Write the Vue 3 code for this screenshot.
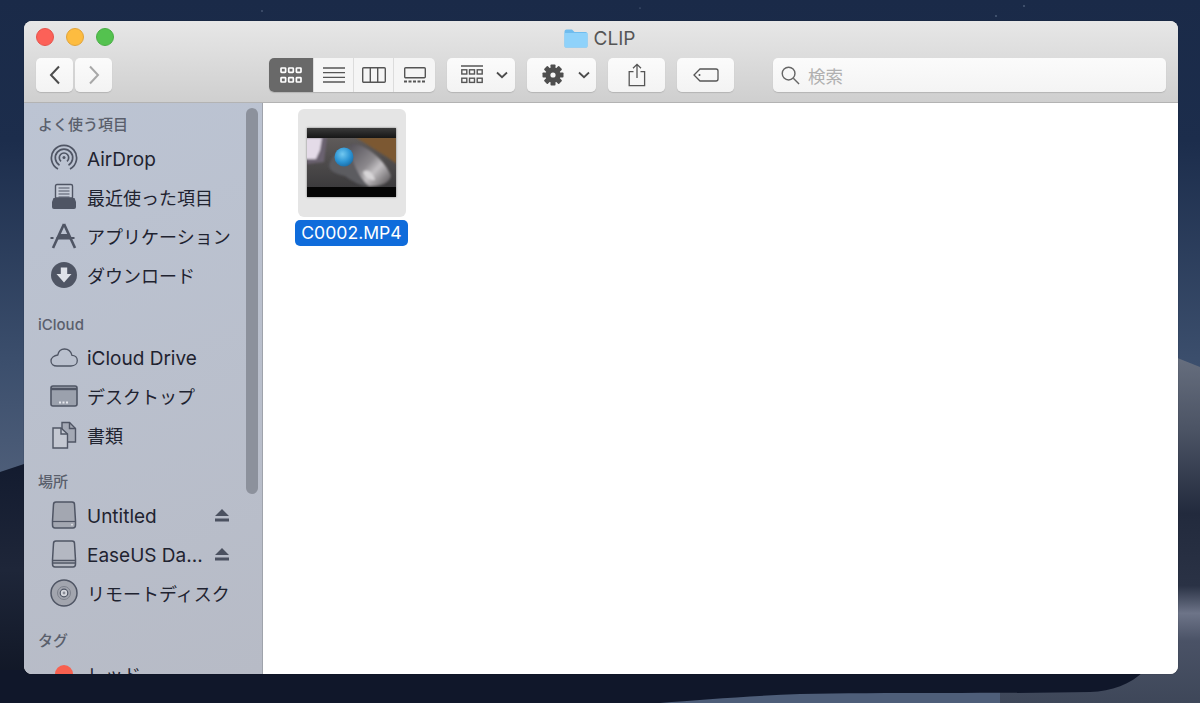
<template>
  <div class="desktop">
    <svg class="wallpaper" viewBox="0 0 1200 703" preserveAspectRatio="none">
      <defs>
        <linearGradient id="sky" x1="0" y1="0" x2="0" y2="1">
          <stop offset="0" stop-color="#1a2a48" />
          <stop offset="0.2" stop-color="#1c2d4c" />
          <stop offset="0.52" stop-color="#3c4f6d" />
          <stop offset="0.68" stop-color="#4e5e79" />
        </linearGradient>
        <linearGradient id="dune" gradientUnits="userSpaceOnUse" x1="0" y1="358" x2="0" y2="703">
          <stop offset="0" stop-color="#666e7e" />
          <stop offset="0.22" stop-color="#4a5263" />
          <stop offset="0.45" stop-color="#222a3d" />
          <stop offset="0.66" stop-color="#2a3245" />
          <stop offset="0.74" stop-color="#6d7488" />
          <stop offset="0.82" stop-color="#4a5266" />
          <stop offset="1" stop-color="#3e4759" />
        </linearGradient>
        <linearGradient id="shade" x1="0" y1="0" x2="0" y2="1">
          <stop offset="0" stop-color="#131b2f" />
          <stop offset="0.45" stop-color="#1e2639" />
          <stop offset="1" stop-color="#0e1422" />
        </linearGradient>
      </defs>
      <rect width="1200" height="703" fill="url(#sky)" />
      <g fill="#6f7f99">
        <circle cx="1024" cy="6" r="0.8" />
        <circle cx="996" cy="16" r="0.8" />
        <circle cx="262" cy="11" r="0.7" />
        <circle cx="640" cy="8" r="0.6" />
      </g>
      <path d="M1170 355 L1200 367 V703 H1000 V560 H1170 Z" fill="url(#dune)" />
      <path d="M0 472 L30 462 V703 H0 Z" fill="url(#shade)" />
      <path d="M0 670 H1145 C1130 685 1112 691 1090 692 C1000 694 880 692 800 694 C750 696 700 700 660 703 H0 Z" fill="#10172a" />
    </svg>

    <div class="window">
      <header class="titlebar">
        <div class="title-row">
          <div class="lights">
            <span class="light red"></span>
            <span class="light yellow"></span>
            <span class="light green"></span>
          </div>
          <div class="title">
            <svg class="title-folder" viewBox="0 0 24 19">
              <path d="M0.5 2.5 Q0.5 0.5 2.5 0.5 H8 L10.5 3 H21.5 Q23.5 3 23.5 5 V17 Q23.5 18.5 22 18.5 H2 Q0.5 18.5 0.5 17 Z" fill="#6fbcee" />
              <path d="M0.5 4 H23.5 V17 Q23.5 18.5 22 18.5 H2 Q0.5 18.5 0.5 17 Z" fill="#8fd2fa" />
            </svg>
            <span>CLIP</span>
          </div>
        </div>
        <div class="toolbar">
          <div class="nav">
            <button class="btn nav-btn">
              <svg viewBox="0 0 14 20" width="14" height="20"><path d="M11 1.5 L3 10 L11 18.5" fill="none" stroke="#4c4c4c" stroke-width="2" /></svg>
            </button>
            <button class="btn nav-btn">
              <svg viewBox="0 0 14 20" width="14" height="20"><path d="M3 1.5 L11 10 L3 18.5" fill="none" stroke="#a8a8a8" stroke-width="2" /></svg>
            </button>
          </div>

          <div class="views">
            <div class="view active">
              <svg viewBox="0 0 22 16" width="22" height="16" fill="none" stroke="#fff" stroke-width="1.7">
                <rect x="1" y="1" width="4.6" height="4.4" rx="0.6" /><rect x="8.7" y="1" width="4.6" height="4.4" rx="0.6" /><rect x="16.4" y="1" width="4.6" height="4.4" rx="0.6" />
                <rect x="1" y="10.6" width="4.6" height="4.4" rx="0.6" /><rect x="8.7" y="10.6" width="4.6" height="4.4" rx="0.6" /><rect x="16.4" y="10.6" width="4.6" height="4.4" rx="0.6" />
              </svg>
            </div>
            <div class="view">
              <svg viewBox="0 0 22 16" width="22" height="16" stroke="#555" stroke-width="1.3">
                <path d="M0 1 H22 M0 5.6 H22 M0 10.3 H22 M0 15 H22" />
              </svg>
            </div>
            <div class="view">
              <svg viewBox="0 0 24 16" width="24" height="16" fill="none" stroke="#555" stroke-width="1.4">
                <rect x="0.7" y="0.7" width="22.6" height="14.6" rx="1" /><path d="M8.3 1 V15 M15.7 1 V15" />
              </svg>
            </div>
            <div class="view">
              <svg viewBox="0 0 22 16" width="22" height="16" fill="none" stroke="#555" stroke-width="1.4">
                <rect x="0.7" y="0.7" width="20.6" height="10" rx="1" /><path d="M0 14.5 H22" stroke-width="2.2" stroke-dasharray="3 1.5" />
              </svg>
            </div>
          </div>

          <button class="btn arrange">
            <svg viewBox="0 0 22 20" width="22" height="20" fill="none" stroke="#555" stroke-width="1.4">
              <path d="M0 1 H22" />
              <rect x="0.8" y="4.8" width="5" height="4.2" /><rect x="8.5" y="4.8" width="5" height="4.2" /><rect x="16.2" y="4.8" width="5" height="4.2" />
              <rect x="0.8" y="13.2" width="5" height="4.2" /><rect x="8.5" y="13.2" width="5" height="4.2" /><rect x="16.2" y="13.2" width="5" height="4.2" />
            </svg>
            <svg class="chev" viewBox="0 0 12 8" width="12" height="8"><path d="M1 1.5 L6 6.2 L11 1.5" fill="none" stroke="#4c4c4c" stroke-width="1.8" /></svg>
          </button>

          <button class="btn action">
            <svg viewBox="0 0 22 22" width="22" height="22">
              <g fill="#4e4e4e">
                <circle cx="11" cy="11" r="7.5" />
                <rect x="8.5" y="0.5" width="5" height="21" rx="0.8" />
                <rect x="8.5" y="0.5" width="5" height="21" rx="0.8" transform="rotate(45 11 11)" />
                <rect x="8.5" y="0.5" width="5" height="21" rx="0.8" transform="rotate(90 11 11)" />
                <rect x="8.5" y="0.5" width="5" height="21" rx="0.8" transform="rotate(135 11 11)" />
              </g>
              <circle cx="11" cy="11" r="2.6" fill="#f6f6f6" />
            </svg>
            <svg class="chev" viewBox="0 0 12 8" width="12" height="8"><path d="M1 1.5 L6 6.2 L11 1.5" fill="none" stroke="#4c4c4c" stroke-width="1.8" /></svg>
          </button>

          <button class="btn share">
            <svg viewBox="0 0 18 24" width="18" height="24" fill="none" stroke="#555" stroke-width="1.3">
              <path d="M5.5 8.7 H1.2 V22.6 H16.6 V8.7 H12.5" />
              <path d="M9 15 V1.5 M5 5.3 L9 1.3 L13 5.3" />
            </svg>
          </button>

          <button class="btn tag">
            <svg viewBox="0 0 26 14" width="26" height="14" fill="none" stroke="#555" stroke-width="1.3">
              <path d="M7 1 H23 Q25 1 25 3 V11 Q25 13 23 13 H7 L1 7 Z" />
              <circle cx="6.5" cy="7" r="1" fill="#555" stroke="none" />
            </svg>
          </button>

          <div class="search">
            <svg viewBox="0 0 20 20" width="19" height="19" fill="none" stroke="#666" stroke-width="1.5">
              <circle cx="8" cy="8" r="6.7" /><path d="M13 13 L19 19" />
            </svg>
            <span>検索</span>
          </div>
        </div>
      </header>

      <div class="body">
        <aside class="sidebar">
          <div class="scrollbar"></div>

          <section v-for="group in groups" :key="group.title" class="group">
            <h3>{{ group.title }}</h3>
            <div v-for="item in group.items" :key="item.label" class="row">
              <span class="icon">
                <svg viewBox="0 0 28 28" width="28" height="28" v-html="icons[item.icon]"></svg>
              </span>
              <span class="label" :class="{ jp: isJp(item.label) }">{{ item.label }}</span>
              <svg v-if="item.eject" class="eject" viewBox="0 0 14 14" width="14" height="14">
                <path d="M7 1 L14 8 H0 Z M0 10.5 H14 V13.5 H0 Z" fill="#4b5160" />
              </svg>
            </div>
          </section>
          <section class="group">
            <h3>タグ</h3>
            <div class="row">
              <span class="icon"><span class="dot"></span></span>
              <span class="label jp">レッド</span>
            </div>
          </section>
        </aside>

        <main class="content">
          <div class="file">
            <div class="thumb-box">
              <svg class="thumb" viewBox="0 0 89 69" width="89" height="69">
                <defs>
                  <radialGradient id="ball" cx="0.42" cy="0.35" r="0.7">
                    <stop offset="0" stop-color="#72c8f0" />
                    <stop offset="0.6" stop-color="#2b93d3" />
                    <stop offset="1" stop-color="#1a6aa3" />
                  </radialGradient>
                  <linearGradient id="mouse" x1="0" y1="0" x2="1" y2="1">
                    <stop offset="0" stop-color="#55525a" />
                    <stop offset="0.45" stop-color="#8c898d" />
                    <stop offset="0.62" stop-color="#c4c1c4" />
                    <stop offset="1" stop-color="#4d4a4c" />
                  </linearGradient>
                  <linearGradient id="band" x1="0" y1="0" x2="0" y2="1">
                    <stop offset="0" stop-color="#3a3a3a" />
                    <stop offset="1" stop-color="#161616" />
                  </linearGradient>
                  <linearGradient id="desk" x1="0" y1="0" x2="0" y2="1">
                    <stop offset="0" stop-color="#5f5b5a" />
                    <stop offset="1" stop-color="#3c3b3d" />
                  </linearGradient>
                  <filter id="soft"><feGaussianBlur stdDeviation="1" /></filter>
                </defs>
                <rect y="10" width="89" height="49" fill="url(#desk)" />
                <g filter="url(#soft)">
                  <path d="M48 9 H90 V36 C76 26 62 18 48 9 Z" fill="#7b5833" />
                  <path d="M-2 9 H20 L17 34 L0 36 Z" fill="#6b6270" />
                  <path d="M-2 10 H15 L13 22 L9 31 H-2 Z" fill="#e4dbe8" />
                  <path d="M22 38 C24 26 38 16 52 18 C56 34 60 50 64 59 C54 58 46 54 38 48 C30 46 23 44 22 38 Z" fill="#5c5b60" />
                  <path d="M44 16 C58 15 78 32 84 48 C82 56 72 59 62 58 C52 50 42 30 44 16 Z" fill="url(#mouse)" />
                  <path d="M56 44 C60 40 66 44 68 52 C62 52 58 50 56 44 Z" fill="#d8d6d8" />
                </g>
                <circle cx="37" cy="29" r="9.5" fill="url(#ball)" />
                <rect width="89" height="10" fill="url(#band)" />
                <rect y="59" width="89" height="10" fill="#050505" />
              </svg>
            </div>
            <div class="file-name">C0002.MP4</div>
          </div>
        </main>
      </div>
    </div>
  </div>
</template>

<script setup>
const groups = [
  {
    title: "よく使う項目",
    items: [
      { label: "AirDrop", icon: "airdrop" },
      { label: "最近使った項目", icon: "recents" },
      { label: "アプリケーション", icon: "apps" },
      { label: "ダウンロード", icon: "download" },
    ],
  },
  {
    title: "iCloud",
    items: [
      { label: "iCloud Drive", icon: "cloud" },
      { label: "デスクトップ", icon: "desktop" },
      { label: "書類", icon: "docs" },
    ],
  },
  {
    title: "場所",
    items: [
      { label: "Untitled", icon: "hdd", eject: true },
      { label: "EaseUS Da...", icon: "ext", eject: true },
      { label: "リモートディスク", icon: "disc" },
    ],
  },
];

const isJp = (text) => /[^\x00-\x7f]/.test(text);

const c = "#4f5564";
const icons = {
  airdrop: `<g fill="none" stroke="${c}" stroke-width="1.7"><path d="M8 25 A12.6 12.6 0 1 1 20 25"/><path d="M9.5 21.2 A8.7 8.7 0 1 1 18.5 21.2"/><path d="M11 17.3 A4.7 4.7 0 1 1 17 17.3"/></g><circle cx="14" cy="13.5" r="1.5" fill="${c}"/>`,
  recents: `<path d="M5.5 3 Q5.5 1.5 7 1.5 H21 Q22.5 1.5 22.5 3 V15 H5.5 Z" fill="#c6ccd8" stroke="${c}" stroke-width="1.4"/><path d="M8.5 5 H19.5 M8.5 8 H19.5 M8.5 11 H19.5 M8.5 14 H19.5" stroke="${c}" stroke-width="1.2"/><path d="M3.5 15 H24.5 L26 19 V24 Q26 26 24 26 H4 Q2 26 2 24 V19 Z" fill="${c}"/>`,
  apps: `<g fill="none" stroke="${c}" stroke-width="2.6"><path d="M14 2 L25 26"/><path d="M14 2 L3 26"/></g><path d="M0.5 16 H27.5" stroke="${c}" stroke-width="2" stroke-dasharray="3 3 18 3 3"/><path d="M7.5 17.5 H20.5 L18 12 H10 Z" fill="${c}"/>`,
  download: `<circle cx="14" cy="14" r="13" fill="${c}"/><path d="M10.8 6.5 H17.2 V13 H21.5 L14 21.5 L6.5 13 H10.8 Z" fill="#dfe2e9"/>`,
  cloud: `<path d="M7 23 H21 C25 23 27.3 20.5 27.3 17.5 C27.3 14.5 25 12.3 22 12.3 C21 8.5 18 6 14.5 6 C11 6 8.5 8.5 7.8 12 C4 12.5 1 15 1 18 C1 21 3.5 23 7 23 Z" fill="none" stroke="${c}" stroke-width="1.3"/>`,
  desktop: `<rect x="1" y="4" width="26" height="20" rx="2" fill="#9ba1ad" stroke="${c}" stroke-width="1.6"/><path d="M1 7 H27" stroke="${c}" stroke-width="2.4"/><path d="M9 20.5 H19" stroke="#e6e8ee" stroke-width="1.8" stroke-dasharray="2 1.5"/>`,
  docs: `<path d="M12 1.5 H19.5 L25.5 7.5 V21 H12 Z" fill="#a4a9b5" stroke="${c}" stroke-width="1.4"/><path d="M19.5 1.5 V7.5 H25.5" fill="none" stroke="${c}" stroke-width="1.4"/><path d="M3 7 H11 L17.5 13 V27 H3 Z" fill="#c4c8d2" stroke="${c}" stroke-width="1.4"/><path d="M11 7 V13 H17.5" fill="none" stroke="${c}" stroke-width="1.4"/>`,
  hdd: `<path d="M3.5 3.5 Q3.5 1 6 1 H22 Q24.5 1 24.5 3.5 L25.5 20 V24 Q25.5 27 23 27 H5 Q2.5 27 2.5 24 V20 Z" fill="#a3a7b1" stroke="${c}" stroke-width="1.5"/><path d="M2.5 20.5 H25.5" stroke="${c}" stroke-width="1.2"/><circle cx="22" cy="23.7" r="0.9" fill="#e2e4ea"/>`,
  ext: `<path d="M3.5 3.5 Q3.5 1 6 1 H22 Q24.5 1 24.5 3.5 L25.5 20 V24 Q25.5 27 23 27 H5 Q2.5 27 2.5 24 V20 Z" fill="#b4b8c2" stroke="${c}" stroke-width="1.5"/><path d="M3 20.5 H25 M3 23 H25" stroke="${c}" stroke-width="1.5"/>`,
  disc: `<circle cx="14" cy="14" r="13" fill="#a2a5ae" stroke="${c}" stroke-width="1.5"/><circle cx="14" cy="14" r="6.5" fill="none" stroke="#7d818c" stroke-width="1"/><circle cx="14" cy="14" r="3.8" fill="#d6d8de" stroke="${c}" stroke-width="1.2"/><circle cx="14" cy="14" r="1.4" fill="#8a8d97"/>`,
};
</script>

<style>
html, body {
  margin: 0;
  height: 100%;
  overflow: hidden;
}
</style>

<style scoped>
.desktop {
  position: relative;
  width: 1200px;
  height: 703px;
  box-sizing: border-box;
  padding: 21px 22px 29px 24px;
  font-family: Inter, "Noto Sans CJK JP", sans-serif;
  overflow: hidden;
}

.wallpaper {
  position: absolute;
  left: 0;
  top: 0;
  width: 1200px;
  height: 703px;
}

.window {
  position: relative;
  height: 653px;
  display: flex;
  flex-direction: column;
  border-radius: 8px;
  overflow: hidden;
  background: #fff;
  box-shadow: 0 0 1px rgba(0, 0, 0, 0.6);
}

.titlebar {
  height: 81px;
  flex: none;
  background: linear-gradient(#e7e7e7, #cfcfcf);
  border-bottom: 1px solid #b3b3b3;
}

.title-row {
  position: relative;
  height: 37px;
  display: flex;
  align-items: center;
  justify-content: center;
}

.lights {
  position: absolute;
  left: 12px;
  top: 7px;
  display: flex;
  gap: 12px;
}

.light {
  width: 18px;
  height: 18px;
  border-radius: 50%;
  box-sizing: border-box;
}
.red { background: #fc6158; border: 1px solid #e5534b; }
.yellow { background: #fdbc40; border: 1px solid #e0a33a; }
.green { background: #54c24f; border: 1px solid #48ad44; }

.title {
  display: flex;
  align-items: center;
  gap: 6px;
  margin-top: -3px;
  margin-left: -3px;
  font-size: 19px;
  color: #555;
}

.title-folder {
  width: 24px;
  height: 19px;
}

.toolbar {
  display: flex;
  align-items: flex-start;
  padding-left: 12px;
}

.btn {
  height: 34px;
  padding: 0;
  border: none;
  border-radius: 5px;
  background: linear-gradient(#fbfbfb, #f3f3f3);
  box-shadow: 0 1px 1px #b4b4b4;
  display: flex;
  align-items: center;
  justify-content: center;
}

.nav {
  display: flex;
  gap: 2px;
}

.nav-btn {
  width: 37px;
}

.views {
  margin-left: 157px;
  width: 166px;
  height: 34px;
  display: flex;
  border-radius: 5px;
  overflow: hidden;
  background: #f5f5f5;
  box-shadow: 0 1px 1px #b4b4b4;
}

.view {
  width: 40px;
  box-sizing: border-box;
  display: flex;
  align-items: center;
  justify-content: center;
  border-left: 1px solid #dcdcdc;
}

.view:last-child {
  width: 42px;
}

.view.active {
  width: 44px;
  background: #696969;
  border-left: none;
}

.arrange {
  margin-left: 12px;
  width: 68px;
  padding-left: 14px;
  justify-content: flex-start;
  gap: 13px;
}

.action {
  margin-left: 12px;
  width: 69px;
  padding-left: 15px;
  justify-content: flex-start;
  gap: 14px;
}

.share {
  margin-left: 12px;
  width: 57px;
}

.tag {
  margin-left: 12px;
  width: 57px;
}

.search {
  margin-left: 39px;
  width: 393px;
  height: 34px;
  box-sizing: border-box;
  padding-left: 8px;
  display: flex;
  align-items: center;
  gap: 8px;
  border-radius: 5px;
  background: linear-gradient(#fbfbfb, #f4f4f4);
  box-shadow: 0 1px 1px #b4b4b4;
  font-size: 17.5px;
  color: #b0b0b0;
}

.body {
  flex: 1;
  min-height: 0;
  display: flex;
}

.sidebar {
  position: relative;
  width: 239px;
  flex: none;
  box-sizing: border-box;
  padding: 11px 0 0 14px;
  background: linear-gradient(160deg, #bcc4d3, #b7bbc6);
  border-right: 1px solid #9fa3ab;
  overflow: hidden;
}

.scrollbar {
  position: absolute;
  left: 222px;
  top: 5px;
  width: 12px;
  height: 386px;
  border-radius: 6px;
  background: #8c919c;
}

.group {
  margin-bottom: 20px;
}

.group:nth-of-type(2) {
  margin-bottom: 17px;
}

.group:nth-of-type(3) {
  margin-bottom: 18px;
}

.group:nth-of-type(2) h3 {
  margin-bottom: 3px;
}

.group h3 {
  margin: 0 0 4px;
  height: 20px;
  line-height: 22px;
  font-size: 15px;
  font-weight: 500;
  color: #5a5f6c;
}

.row {
  height: 39px;
  display: flex;
  align-items: center;
  padding-left: 12px;
  font-size: 19px;
  color: #1f2330;
}

.icon {
  width: 28px;
  height: 28px;
  flex: none;
  margin-right: 9px;
}

.icon svg {
  display: block;
}

.label {
  white-space: nowrap;
  padding-top: 3px;
}

.label.jp {
  padding-top: 0;
  font-size: 18px;
}

.eject {
  position: absolute;
  left: 191px;
}

.dot {
  display: block;
  width: 18px;
  height: 18px;
  margin: 5px;
  border-radius: 50%;
  background: #f8604f;
}

.content {
  flex: 1;
  padding: 6px 0 0 32px;
  background: #fff;
}

.file {
  width: 113px;
  display: flex;
  flex-direction: column;
  align-items: center;
}

.thumb-box {
  width: 108px;
  height: 108px;
  box-sizing: border-box;
  padding-top: 19px;
  display: flex;
  justify-content: center;
  align-items: flex-start;
  background: #e5e5e5;
  border-radius: 6px;
}

.thumb {
  box-shadow: 0 0 2px rgba(0, 0, 0, 0.5);
}

.file-name {
  margin-top: 3px;
  width: 113px;
  height: 26px;
  line-height: 26px;
  text-align: center;
  border-radius: 5px;
  background: #0f6cdb;
  color: #fff;
  font-size: 17.6px;
}
</style>
